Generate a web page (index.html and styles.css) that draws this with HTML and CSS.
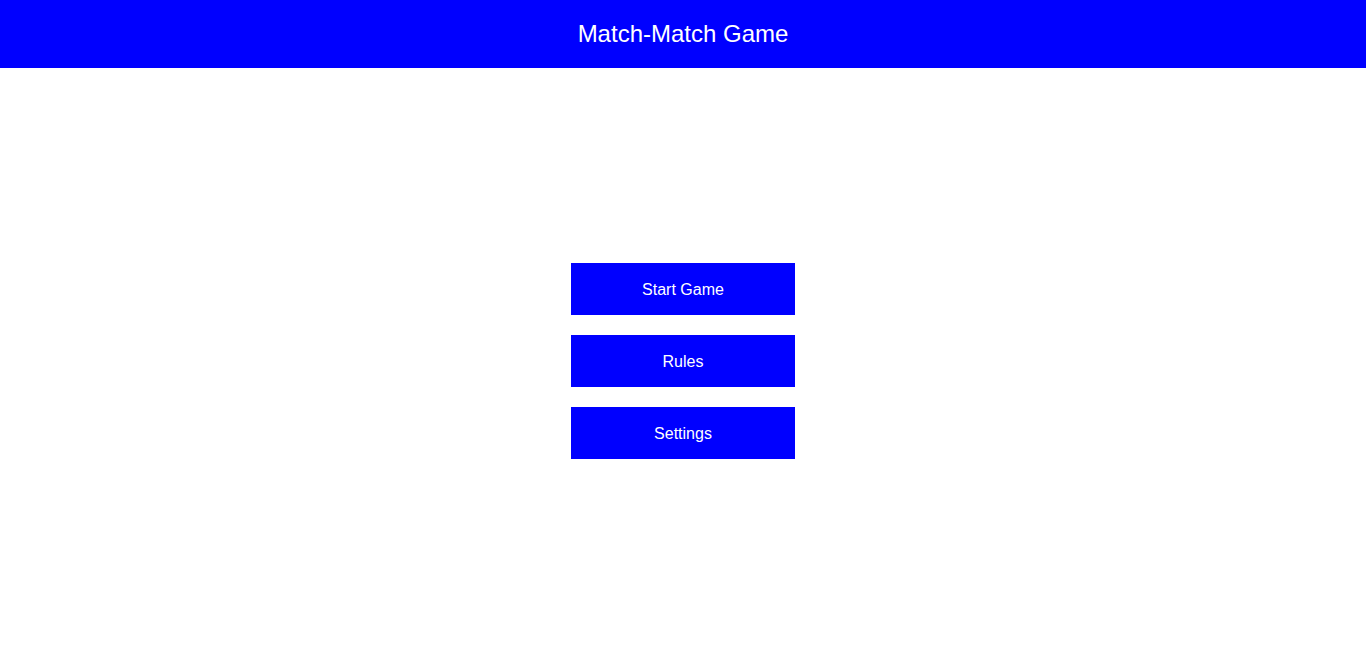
FILE: index.html
```html
<!DOCTYPE html>
<html>
<head>
<meta charset="utf-8">
<link rel="stylesheet" href="styles.css">
</head>
<body>
<header class="header"><h1 class="title">Match-Match Game</h1></header>
<main class="main">
  <div class="menu">
    <button class="btn">Start Game</button>
    <button class="btn">Rules</button>
    <button class="btn">Settings</button>
  </div>
</main>
</body>
</html>
```
FILE: styles.css
```css
html, body { margin: 0; padding: 0; height: 100%; }
body {
  font-family: "Liberation Sans", Arial, sans-serif;
  background: #fff;
  display: flex;
  flex-direction: column;
}
.header {
  height: 68px;
  background: #0000ff;
  display: flex;
  align-items: center;
  justify-content: center;
  flex-shrink: 0;
}
.title {
  margin: 0;
  color: #fff;
  font-size: 24px;
  font-weight: normal;
}
.main {
  flex: 1;
  display: flex;
  align-items: center;
  justify-content: center;
}
.menu {
  display: flex;
  flex-direction: column;
  gap: 20px;
}
.btn {
  box-sizing: border-box;
  width: 224px;
  height: 52px;
  border: none;
  background: #0000ff;
  color: #fff;
  font-family: "Liberation Sans", Arial, sans-serif;
  font-size: 16px;
  padding: 2px 0 0 0;
  margin: 0;
}
```
